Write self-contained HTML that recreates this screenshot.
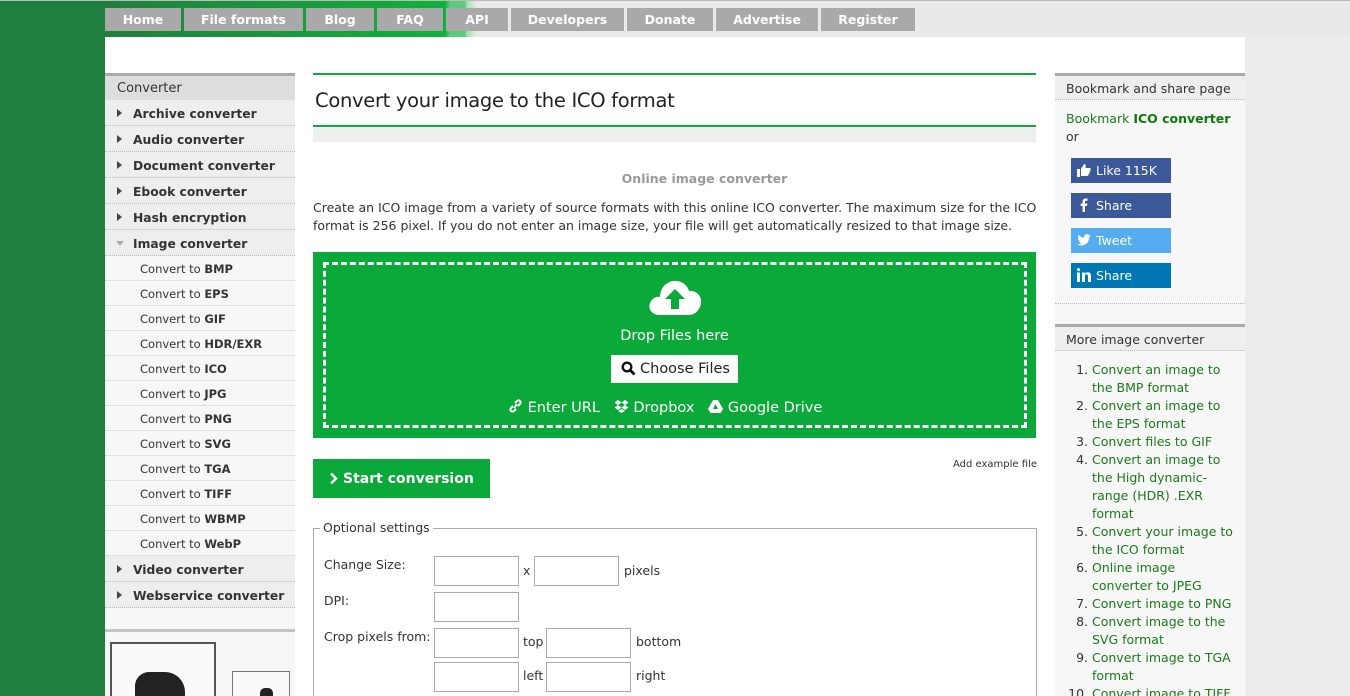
<!DOCTYPE html>
<html><head><meta charset="utf-8">
<style>
*{margin:0;padding:0;box-sizing:border-box}
html,body{width:1350px;height:696px;overflow:hidden}
body{background:#ececec;font-family:"DejaVu Sans","Liberation Sans",sans-serif;font-size:12.5px;color:#333;position:relative}
.a{position:absolute}
#lg{left:0;top:0;width:105px;height:696px;background:#1f7f3e}
#top{left:105px;top:1px;width:1245px;height:36px;background:linear-gradient(90deg,#1f7f3e 0px,#0fb13a 330px,#0db13a 340px,#5cc97c 345px,#5cc97c 360px,#a8dfb4 362px,#e9e9e9 372px,#e9e9e9 100%)}
#topline{left:0;top:0;width:1350px;height:1px;background:#bbb}
.nav{top:8px;height:23px;background:#a9a9a9;color:#fff;font-weight:bold;font-size:12.5px;text-align:center;line-height:24px}
#wrap{left:105px;top:37px;width:1140px;height:659px;background:#fff}
#ls{left:105px;top:73px;width:190px;height:623px;background:#f7f7f7}
.lh{left:105px;width:190px;background:#ddd;border-top:3px solid #aaa;height:27px;padding-left:12px;line-height:26px;font-size:13px}
.li{left:105px;width:190px;height:26px;background:#eee;border-bottom:1px dotted #bbb;font-weight:bold;font-size:12.3px;line-height:25px;padding-top:2px;padding-left:28px;color:#333;white-space:nowrap}
.li:before{content:"";position:absolute;left:12px;top:9px;border-left:5px solid #444;border-top:4px solid transparent;border-bottom:4px solid transparent}
.li.open:before{left:11px;top:11px;border-top:5px solid #aaa;border-left:4px solid transparent;border-right:4px solid transparent;border-bottom:0}
.si{left:105px;width:190px;height:25px;background:#f7f7f7;border-bottom:1px dotted #ccc;font-size:11.5px;line-height:24px;padding-top:1px;padding-left:35px;color:#333}
#rs{left:1055px;top:73px;width:190px;height:623px;background:#f7f7f7}
.rh{left:1055px;width:190px;height:27px;background:#eee;border-top:3px solid #aaa;border-bottom:1px dotted #bbb;padding-left:11px;line-height:25px;font-size:12.5px;color:#333}
.sb{left:1071px;width:100px;height:25px;color:#fff;font-size:12.5px;line-height:25px;padding-left:25px}
.sb svg{position:absolute;left:6px;top:5px}
ol{position:absolute;left:1068px;top:361px;width:170px;padding-left:24px;font-size:12.5px;line-height:18px;color:#333}
ol li span{color:#1a7a1a}
.in{border:1px solid #aaa;height:30px;background:#fff}
.lb{font-size:12.5px;color:#333}
</style></head><body>
<div class="a" id="lg"></div>
<div class="a" id="top"></div>
<div class="a" id="topline"></div>
<div class="a" id="wrap"></div>
<div class="a nav" style="left:105px;width:76px">Home</div>
<div class="a nav" style="left:184px;width:119px">File formats</div>
<div class="a nav" style="left:306px;width:68px">Blog</div>
<div class="a nav" style="left:377px;width:66px">FAQ</div>
<div class="a nav" style="left:446px;width:62px">API</div>
<div class="a nav" style="left:511px;width:113px">Developers</div>
<div class="a nav" style="left:627px;width:86px">Donate</div>
<div class="a nav" style="left:716px;width:102px">Advertise</div>
<div class="a nav" style="left:821px;width:94px">Register</div>

<div class="a" id="ls"></div>
<div class="a lh" style="top:73px">Converter</div>
<div class="a li" style="top:100px">Archive converter</div>
<div class="a li" style="top:126px">Audio converter</div>
<div class="a li" style="top:152px">Document converter</div>
<div class="a li" style="top:178px">Ebook converter</div>
<div class="a li" style="top:204px">Hash encryption</div>
<div class="a li open" style="top:230px">Image converter</div>
<div class="a si" style="top:256px">Convert to <b>BMP</b></div>
<div class="a si" style="top:281px">Convert to <b>EPS</b></div>
<div class="a si" style="top:306px">Convert to <b>GIF</b></div>
<div class="a si" style="top:331px">Convert to <b>HDR/EXR</b></div>
<div class="a si" style="top:356px">Convert to <b>ICO</b></div>
<div class="a si" style="top:381px">Convert to <b>JPG</b></div>
<div class="a si" style="top:406px">Convert to <b>PNG</b></div>
<div class="a si" style="top:431px">Convert to <b>SVG</b></div>
<div class="a si" style="top:456px">Convert to <b>TGA</b></div>
<div class="a si" style="top:481px">Convert to <b>TIFF</b></div>
<div class="a si" style="top:506px">Convert to <b>WBMP</b></div>
<div class="a si" style="top:531px">Convert to <b>WebP</b></div>
<div class="a li" style="top:556px">Video converter</div>
<div class="a li" style="top:582px">Webservice converter</div>
<div class="a" style="left:105px;top:629px;width:190px;height:3px;background:#c4c4c4"></div>
<div class="a" style="left:110px;top:642px;width:106px;height:60px;border:2px solid #555;background:#fafafa"></div>
<div class="a" style="left:135px;top:672px;width:50px;height:30px;background:#222;border-radius:14px 20px 0 0"></div>
<div class="a" style="left:232px;top:671px;width:58px;height:30px;border:1px solid #777;background:#fafafa"></div>
<div class="a" style="left:260px;top:688px;width:13px;height:12px;background:#222;border-radius:5px 5px 0 0"></div>

<div class="a" style="left:313px;top:73px;width:723px;height:2px;background:#0daa3a"></div>
<div class="a" style="left:315px;top:89px;font-size:19.5px;color:#222;letter-spacing:-0.3px">Convert your image to the ICO format</div>
<div class="a" style="left:313px;top:125px;width:723px;height:2px;background:#0daa3a"></div>
<div class="a" style="left:313px;top:128px;width:723px;height:14px;background:#eee"></div>
<div class="a" style="left:313px;top:171px;width:783px;text-align:center;color:#999;font-weight:bold;font-size:12.5px">Online image converter</div>
<div class="a" style="left:313px;top:199px;width:725px;line-height:18px;font-size:12.5px;color:#333">Create an ICO image from a variety of source formats with this online ICO converter. The maximum size for the ICO format is 256 pixel. If you do not enter an image size, your file will get automatically resized to that image size.</div>
<div class="a" style="left:313px;top:252px;width:723px;height:186px;background:#0ba83a"></div>
<div class="a" style="left:323px;top:262px;width:704px;height:166px;border:3px dashed #fff"></div>
<svg class="a" style="left:648px;top:277px" width="54" height="40" viewBox="0 0 54 40"><path d="M12 38 C3 38 0 31 2 26 C4 21 9 19 12 20 C12 10 20 3 29 4 C36 5 40 10 41 14 C48 13 54 19 53 26 C52 33 47 38 41 38 Z" fill="#fff"/><path d="M27 12 L37 22 L31 22 L31 32 L23 32 L23 22 L17 22 Z" fill="#0ba83a"/></svg>
<div class="a" style="left:313px;top:328px;width:723px;text-align:center;color:#fff;font-size:14.5px">Drop Files here</div>
<div class="a" style="left:611px;top:355px;width:127px;height:28px;background:#fff;color:#222;font-size:14.5px;line-height:28px;padding-left:29px">Choose Files</div>
<svg class="a" style="left:621px;top:361px" width="15" height="15" viewBox="0 0 15 15"><circle cx="6" cy="6" r="4.3" fill="none" stroke="#111" stroke-width="2.4"/><path d="M9 9 L13.5 13.5" stroke="#111" stroke-width="2.8"/></svg>
<div class="a" style="left:508px;top:399px;color:#fff;font-size:14.5px;white-space:nowrap">
<svg width="15" height="14" viewBox="0 0 15 14" style="vertical-align:-1px"><path d="M6 9 L9 5 M5 7 L3 9 a2 2 0 0 0 3 3 L8 10 M10 7 L12 5 a2 2 0 0 0 -3 -3 L7 4" stroke="#fff" stroke-width="2" fill="none"/></svg> Enter URL &nbsp;&nbsp;<svg width="15" height="13" viewBox="0 0 15 13" style="vertical-align:-1px"><path d="M4 0 L7.5 2.5 L4 5 L0.5 2.5Z M11 0 L14.5 2.5 L11 5 L7.5 2.5Z M4 5 L7.5 7.5 L4 10 L0.5 7.5Z M11 5 L14.5 7.5 L11 10 L7.5 7.5Z M4 11 L7.5 9 L11 11 L7.5 13Z" fill="#fff"/></svg> Dropbox &nbsp;&nbsp;<svg width="15" height="13" viewBox="0 0 15 13" style="vertical-align:-1px"><path d="M5 0 L10 0 L15 9 L12.5 13 L2.5 13 L0 9Z" fill="#fff"/><path d="M7.5 4 L10 9 L5 9Z" fill="#0ba83a"/></svg> Google Drive</div>
<div class="a" style="left:313px;top:459px;width:177px;height:39px;background:#0ba83a;color:#fff;font-weight:bold;font-size:14px;line-height:40px;padding-left:30px">Start conversion</div>
<svg class="a" style="left:329px;top:472px" width="9" height="13" viewBox="0 0 9 13"><path d="M2 1.5 L7 6.5 L2 11.5" stroke="#fff" stroke-width="2.4" fill="none"/></svg>
<div class="a" style="left:953px;top:459px;font-size:10px;color:#333">Add example file</div>

<div class="a" style="left:313px;top:528px;width:724px;height:180px;border:1px solid #aaa"></div>
<div class="a" style="left:320px;top:520px;background:#fff;padding:0 3px;font-size:12.5px">Optional settings</div>
<div class="a lb" style="left:324px;top:557px">Change Size:</div>
<div class="a in" style="left:434px;top:556px;width:85px"></div>
<div class="a lb" style="left:523px;top:563px">x</div>
<div class="a in" style="left:534px;top:556px;width:85px"></div>
<div class="a lb" style="left:624px;top:563px">pixels</div>
<div class="a lb" style="left:324px;top:593px">DPI:</div>
<div class="a in" style="left:434px;top:592px;width:85px"></div>
<div class="a lb" style="left:324px;top:629px">Crop pixels from:</div>
<div class="a in" style="left:434px;top:628px;width:85px"></div>
<div class="a lb" style="left:523px;top:634px">top</div>
<div class="a in" style="left:546px;top:628px;width:85px"></div>
<div class="a lb" style="left:636px;top:634px">bottom</div>
<div class="a in" style="left:434px;top:662px;width:85px"></div>
<div class="a lb" style="left:523px;top:668px">left</div>
<div class="a in" style="left:546px;top:662px;width:85px"></div>
<div class="a lb" style="left:636px;top:668px">right</div>

<div class="a" id="rs"></div>
<div class="a rh" style="top:73px">Bookmark and share page</div>
<div class="a" style="left:1066px;top:110px;font-size:12.5px;color:#1a7a1a;line-height:18px">Bookmark <b style="color:#0a7a0a">ICO converter</b><br><span style="color:#333">or</span></div>
<div class="a sb" style="top:158px;background:#3b5998"><svg width="14" height="14" viewBox="0 0 14 14"><path d="M0 6h3v8H0z M4 6 L7 1 C9 1 9 3 8.5 5 L13 5 C14 5 14 7 13 7 C14 8 13 9 12.5 9 C13 10 12 11 11.5 11 C12 12 11 13 10 13 L4 13Z" fill="#fff"/></svg>Like 115K</div>
<div class="a sb" style="top:193px;background:#3b5998"><svg width="14" height="14" viewBox="0 0 14 14"><path d="M8 14V8h2l.4-2.5H8V4c0-.7.3-1.2 1.3-1.2h1.2V.6C10.2.5 9.5.4 8.8.4 7 .4 5.6 1.5 5.6 3.6v1.9H3.7V8h1.9v6Z" fill="#fff"/></svg>Share</div>
<div class="a sb" style="top:228px;background:#55acee"><svg width="14" height="14" viewBox="0 0 14 14"><path d="M14 2.5c-.5.2-1 .4-1.6.5.6-.4 1-.9 1.2-1.5-.5.3-1.1.6-1.8.7C11.3 1.6 10.6 1.3 9.8 1.3 8.2 1.3 7 2.6 7 4.1c0 .2 0 .4.1.6C4.7 4.6 2.7 3.5 1.300 1.8c-.3.4-.4.9-.4 1.4 0 1 .5 1.8 1.3 2.3-.5 0-.9-.1-1.3-.3 0 1.4 1 2.5 2.3 2.8-.4.1-.8.1-1.3.1.4 1.1 1.4 1.9 2.6 1.9-1 .8-2.2 1.2-3.500 1.2H0c1.2.8 2.7 1.2 4.3 1.2 5.2 0 8-4.3 8-8v-.4c.7-.4 1.2-1 1.7-1.5Z" fill="#fff"/></svg>Tweet</div>
<div class="a sb" style="top:263px;background:#0077b5"><svg width="14" height="14" viewBox="0 0 14 14"><path d="M0 4.5h3V14H0z M1.5 0a1.6 1.6 0 1 1 0 3.2 1.6 1.6 0 0 1 0-3.2z M5 4.5h2.8v1.3C8.3 5 9.3 4.3 10.7 4.3 13.5 4.3 14 6 14 8.4V14h-3V9c0-1.2 0-2.6-1.6-2.6S7.9 7.6 7.9 9V14H5Z" fill="#fff"/></svg>Share</div>
<div class="a" style="left:1055px;top:303px;width:190px;border-top:1px dotted #bbb"></div>
<div class="a rh" style="top:324px">More image converter</div>
<ol>
<li><span>Convert an image to the BMP format</span></li>
<li><span>Convert an image to the EPS format</span></li>
<li><span>Convert files to GIF</span></li>
<li><span>Convert an image to the High dynamic-range (HDR) .EXR format</span></li>
<li><span>Convert your image to the ICO format</span></li>
<li><span>Online image converter to JPEG</span></li>
<li><span>Convert image to PNG</span></li>
<li><span>Convert image to the SVG format</span></li>
<li><span>Convert image to TGA format</span></li>
<li><span>Convert image to TIFF format</span></li>
</ol>
</body></html>
